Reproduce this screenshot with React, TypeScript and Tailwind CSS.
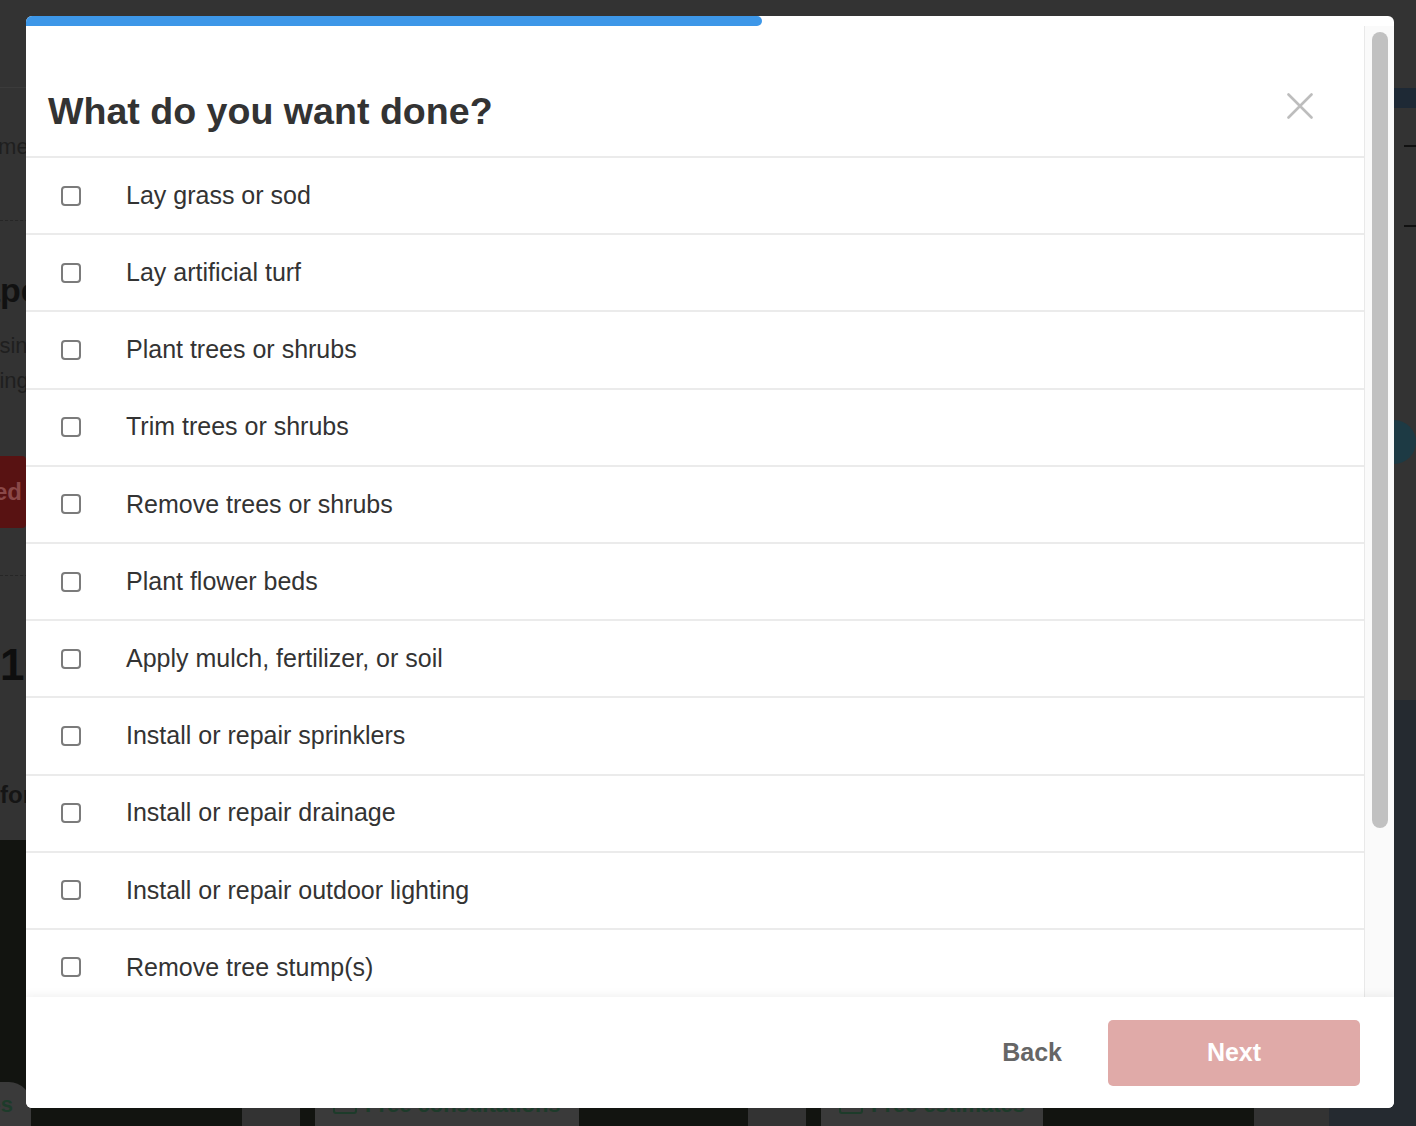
const options = [
  'Lay grass or sod',
  'Lay artificial turf',
  'Plant trees or shrubs',
  'Trim trees or shrubs',
  'Remove trees or shrubs',
  'Plant flower beds',
  'Apply mulch, fertilizer, or soil',
  'Install or repair sprinklers',
  'Install or repair drainage',
  'Install or repair outdoor lighting',
  'Remove tree stump(s)',
  'Remove weeds',
  'Other',
];

// Dimmed page that sits behind the modal
const BackgroundPage = () => {
  return (
    <div className="flex h-full w-full">
      {/* Left: listing page */}
      <div className="flex w-[1357px] flex-col">
        <div className="h-[88px] shrink-0 border-b border-[#3b3b3b]"></div>
        <div className="-ml-[30px] mt-[45px] whitespace-nowrap text-[22px] leading-[28px] text-[#1f1f1f]">Home</div>
        <div className="mt-[59px] w-[300px] border-t border-dashed border-[#262626]"></div>
        <div className="-ml-[138px] mt-[49px] whitespace-nowrap text-[34px] font-bold leading-[40px] text-[#111]">Landscape</div>
        <div className="-ml-[25px] mt-[18px] whitespace-nowrap text-[22px] leading-[35px] text-[#1f1f1f]">busin</div>
        <div className="-ml-[25px] whitespace-nowrap text-[22px] leading-[35px] text-[#1f1f1f]">hiring</div>
        <div className="-ml-[174px] mt-[58px] flex h-[72px] w-[200px] items-center justify-end rounded-[4px] bg-[#581212] pr-[4px] text-[24px] font-bold text-[#8a4848]">
          Get started
        </div>
        <div className="mt-[47px] w-[300px] border-t border-dashed border-[#262626]"></div>
        <div className="mt-[64px] whitespace-nowrap text-[44px] font-bold leading-[50px] text-[#0e0e0e]">10</div>
        <div className="mt-[90px] whitespace-nowrap text-[24px] font-bold leading-[30px] text-[#151515]">for</div>
        <div className="-ml-[206px] mt-[30px] flex gap-[58px]">
          {['Free estimates', 'Free consultations', 'Free estimates'].map((label, i) => (
            <div key={i} className="flex h-[286px] w-[448px] shrink-0 flex-col justify-end bg-[#121410] pl-[15px]">
              <div className="flex h-[44px] w-fit items-center gap-2 rounded-t-[22px] bg-[#3a3a3a] px-[18px] text-[22px] font-bold text-[#1d3b2a]">
                <div className="h-[20px] w-[24px] rounded-[3px] border-2 border-[#1d3b2a]"></div>
                {label}
              </div>
            </div>
          ))}
        </div>
      </div>

      {/* Right: map column */}
      <div className="flex flex-1 flex-col">
        <div className="h-[88px] shrink-0"></div>
        <div className="h-[20px] shrink-0 bg-[#1e2935]"></div>
        <div className="ml-auto mt-[37px] h-[2px] w-[12px] bg-[#111]"></div>
        <div className="ml-auto mt-[78px] h-[2px] w-[12px] bg-[#111]"></div>
        <div className="ml-[43px] mt-[193px] h-[44px] w-[44px] rounded-full bg-[#1d3a44]"></div>
        <div className="ml-[38px] mt-[159px] text-[20px] leading-[24px] text-[#262626]">ga</div>
        <div className="mt-[53px] flex-1 bg-[#252a30]"></div>
      </div>
    </div>
  );
};

const Checkbox = () => (
  <div className="h-5 w-5 shrink-0 rounded-[4px] border-2 border-[#7b7b7b] bg-white"></div>
);

export default function App() {
  return (
    <div className="relative h-[1126px] w-[1416px] overflow-hidden bg-[#333] font-['Liberation_Sans',Arial,sans-serif]">
      <BackgroundPage />

      {/* Modal */}
      <div className="absolute left-[26px] top-[16px] z-10 flex h-[1092px] w-[1368px] flex-col overflow-hidden rounded-[6px] bg-white">
        {/* Progress */}
        <div className="h-[10px] w-[736px] shrink-0 rounded-r-full bg-[#3d97e8]"></div>

        <div className="flex min-h-0 flex-1">
          {/* Scroll content */}
          <div className="flex min-w-0 flex-1 flex-col overflow-hidden">
            <div className="flex h-[132px] shrink-0 items-start justify-between border-b-2 border-[#ebebeb] pl-[22px] pr-[51px]">
              <h1 className="mt-[63px] text-[37.6px] font-bold leading-[44px] text-[#333]">What do you want done?</h1>
              <button className="mt-[67px]" aria-label="Close">
                <svg width="26" height="26" viewBox="0 0 26 26" fill="none">
                  <path d="M1.5 1.5 L24.5 24.5 M24.5 1.5 L1.5 24.5" stroke="#bdbdbd" strokeWidth="2.6" strokeLinecap="round" />
                </svg>
              </button>
            </div>

            {options.map((opt) => (
              <label key={opt} className="flex h-[77.2px] shrink-0 items-center border-b-2 border-[#ebebeb] pl-[35px]">
                <Checkbox />
                <span className="ml-[45px] text-[25px] text-[#333]">{opt}</span>
              </label>
            ))}
          </div>

          {/* Scrollbar */}
          <div className="w-[30px] shrink-0 border-l border-[#e9e9e9] bg-[#fafafa] pt-[6px]">
            <div className="ml-[7px] h-[796px] w-[16px] rounded-full bg-[#c1c1c1]"></div>
          </div>
        </div>

        {/* Footer */}
        <div className="relative flex h-[111px] shrink-0 items-center justify-end bg-white pr-[34px] shadow-[0_-3px_8px_rgba(0,0,0,0.05)]">
          <button className="mr-[46px] text-[25px] font-bold text-[#666]">Back</button>
          <button className="h-[66px] w-[252px] rounded-[5px] bg-[#e0aaa8] text-[25px] font-bold text-white">Next</button>
        </div>
      </div>
    </div>
  );
}
